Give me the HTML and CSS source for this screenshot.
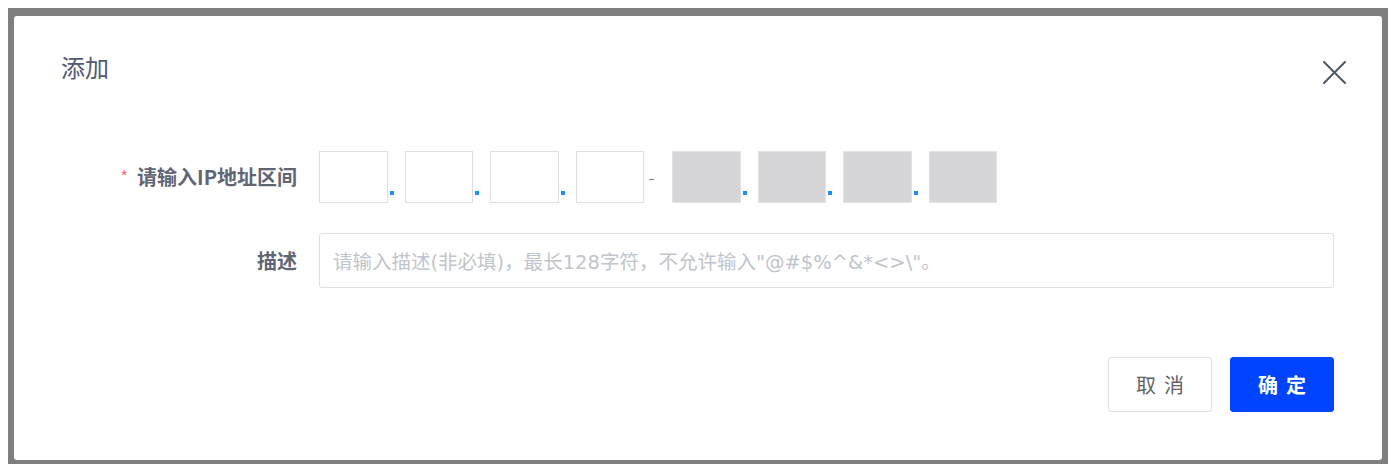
FILE: index.html
```html
<!DOCTYPE html>
<html lang="zh-CN">
<head>
<meta charset="utf-8">
<title>添加</title>
<link rel="stylesheet" href="styles.css">
</head>
<body>
<div class="mask">
  <div class="dialog">
    <div class="header">
      <div class="title">添加</div>
      <button class="close" aria-label="关闭">
        <svg width="23" height="23" viewBox="0 0 23 23"><path d="M1 1 L22 22 M22 1 L1 22" stroke="#4f5666" stroke-width="2" fill="none" stroke-linecap="round"/></svg>
      </button>
    </div>
    <div class="form">
      <div class="row">
        <div class="label"><span class="req">*</span>请输入IP地址区间</div>
        <div class="ip">
          <div class="box"></div><div class="sep"><i class="dot"></i></div>
          <div class="box"></div><div class="sep"><i class="dot"></i></div>
          <div class="box"></div><div class="sep"><i class="dot"></i></div>
          <div class="box"></div>
          <div class="dash-sep"><i class="dash"></i></div>
          <div class="box off"></div><div class="sep"><i class="dot"></i></div>
          <div class="box off"></div><div class="sep"><i class="dot"></i></div>
          <div class="box off"></div><div class="sep"><i class="dot"></i></div>
          <div class="box off"></div>
        </div>
      </div>
      <div class="row row2">
        <div class="label">描述</div>
        <div class="desc"><span class="ph">请输入描述(非必填)，最长128字符，不允许输入"@#$%^&amp;*&lt;&gt;\"。</span></div>
      </div>
    </div>
    <div class="footer">
      <button class="btn cancel">取消</button>
      <button class="btn ok">确定</button>
    </div>
  </div>
</div>
</body>
</html>
```

FILE: styles.css
```css
html, body {
  margin: 0;
  padding: 0;
  background: #ffffff;
}
body {
  font-family: "Noto Sans CJK SC", "Noto Sans", sans-serif;
}
.mask {
  margin: 8px;
  width: 1380px;
  height: 456px;
  box-sizing: border-box;
  padding: 8px 6px 4px 6px;
  background: #7f7f7f;
}
.dialog {
  width: 1368px;
  height: 444px;
  background: #ffffff;
  border-radius: 3px;
  display: flex;
  flex-direction: column;
}
.header {
  display: flex;
  justify-content: space-between;
  align-items: flex-start;
  padding: 35px 36px 0 47px;
}
.title {
  font-size: 24px;
  line-height: 32px;
  color: #515a6e;
}
.close {
  margin-top: 10px;
  padding: 0;
  border: 0;
  background: transparent;
  width: 23px;
  height: 23px;
  display: block;
}
.close svg { display: block; }
.form {
  margin-top: 67px;
  display: flex;
  flex-direction: column;
  gap: 30px;
}
.row {
  display: flex;
  align-items: center;
  gap: 22px;
}
.label {
  width: 283px;
  flex: none;
  text-align: right;
  font-size: 20px;
  font-weight: 700;
  color: #5f6573;
  line-height: 28px;
}
.req {
  color: #f56c6c;
  font-weight: 400;
  font-size: 16px;
  margin-right: 9px;
  position: relative;
  top: -2px;
}
.ip {
  display: flex;
  align-items: stretch;
  height: 52px;
}
.box {
  width: 68.5px;
  height: 52px;
  box-sizing: border-box;
  border: 1px solid #dcdfe6;
  background: #fff;
}
.box.off {
  background: #d6d6d8;
  border-color: #e3e3e6;
}
.sep {
  width: 17px;
  display: flex;
  align-items: flex-end;
}
.dot {
  display: block;
  width: 4px;
  height: 4px;
  background: #1890ff;
  margin: 0 0 8px 2px;
}
.dash-sep {
  width: 28px;
  display: flex;
  align-items: center;
}
.dash {
  display: block;
  width: 5px;
  height: 1px;
  background: #7a808c;
  margin: 4px 0 0 5px;
}
.desc {
  width: 1015px;
  height: 55px;
  box-sizing: border-box;
  border: 1px solid #dcdfe6;
  border-radius: 3px;
  padding: 0 13px;
  display: flex;
  align-items: center;
}
.ph {
  font-family: "DejaVu Sans", "Noto Sans CJK SC", sans-serif;
  font-size: 19.5px;
  color: #c0c4cc;
  white-space: nowrap;
}
.footer {
  margin-top: 69px;
  display: flex;
  justify-content: flex-end;
  gap: 18px;
  padding-right: 48px;
}
.btn {
  height: 55px;
  box-sizing: border-box;
  border-radius: 3px;
  font-family: "Noto Sans CJK SC", "Noto Sans", sans-serif;
  font-size: 20px;
  letter-spacing: 8px;
  padding: 0 0 0 8px;
}
.cancel {
  width: 104px;
  background: #fff;
  border: 1px solid #dcdfe6;
  color: #606266;
}
.ok {
  width: 104px;
  background: #0044ff;
  border: 1px solid #0044ff;
  color: #fff;
  font-weight: 700;
}
```
